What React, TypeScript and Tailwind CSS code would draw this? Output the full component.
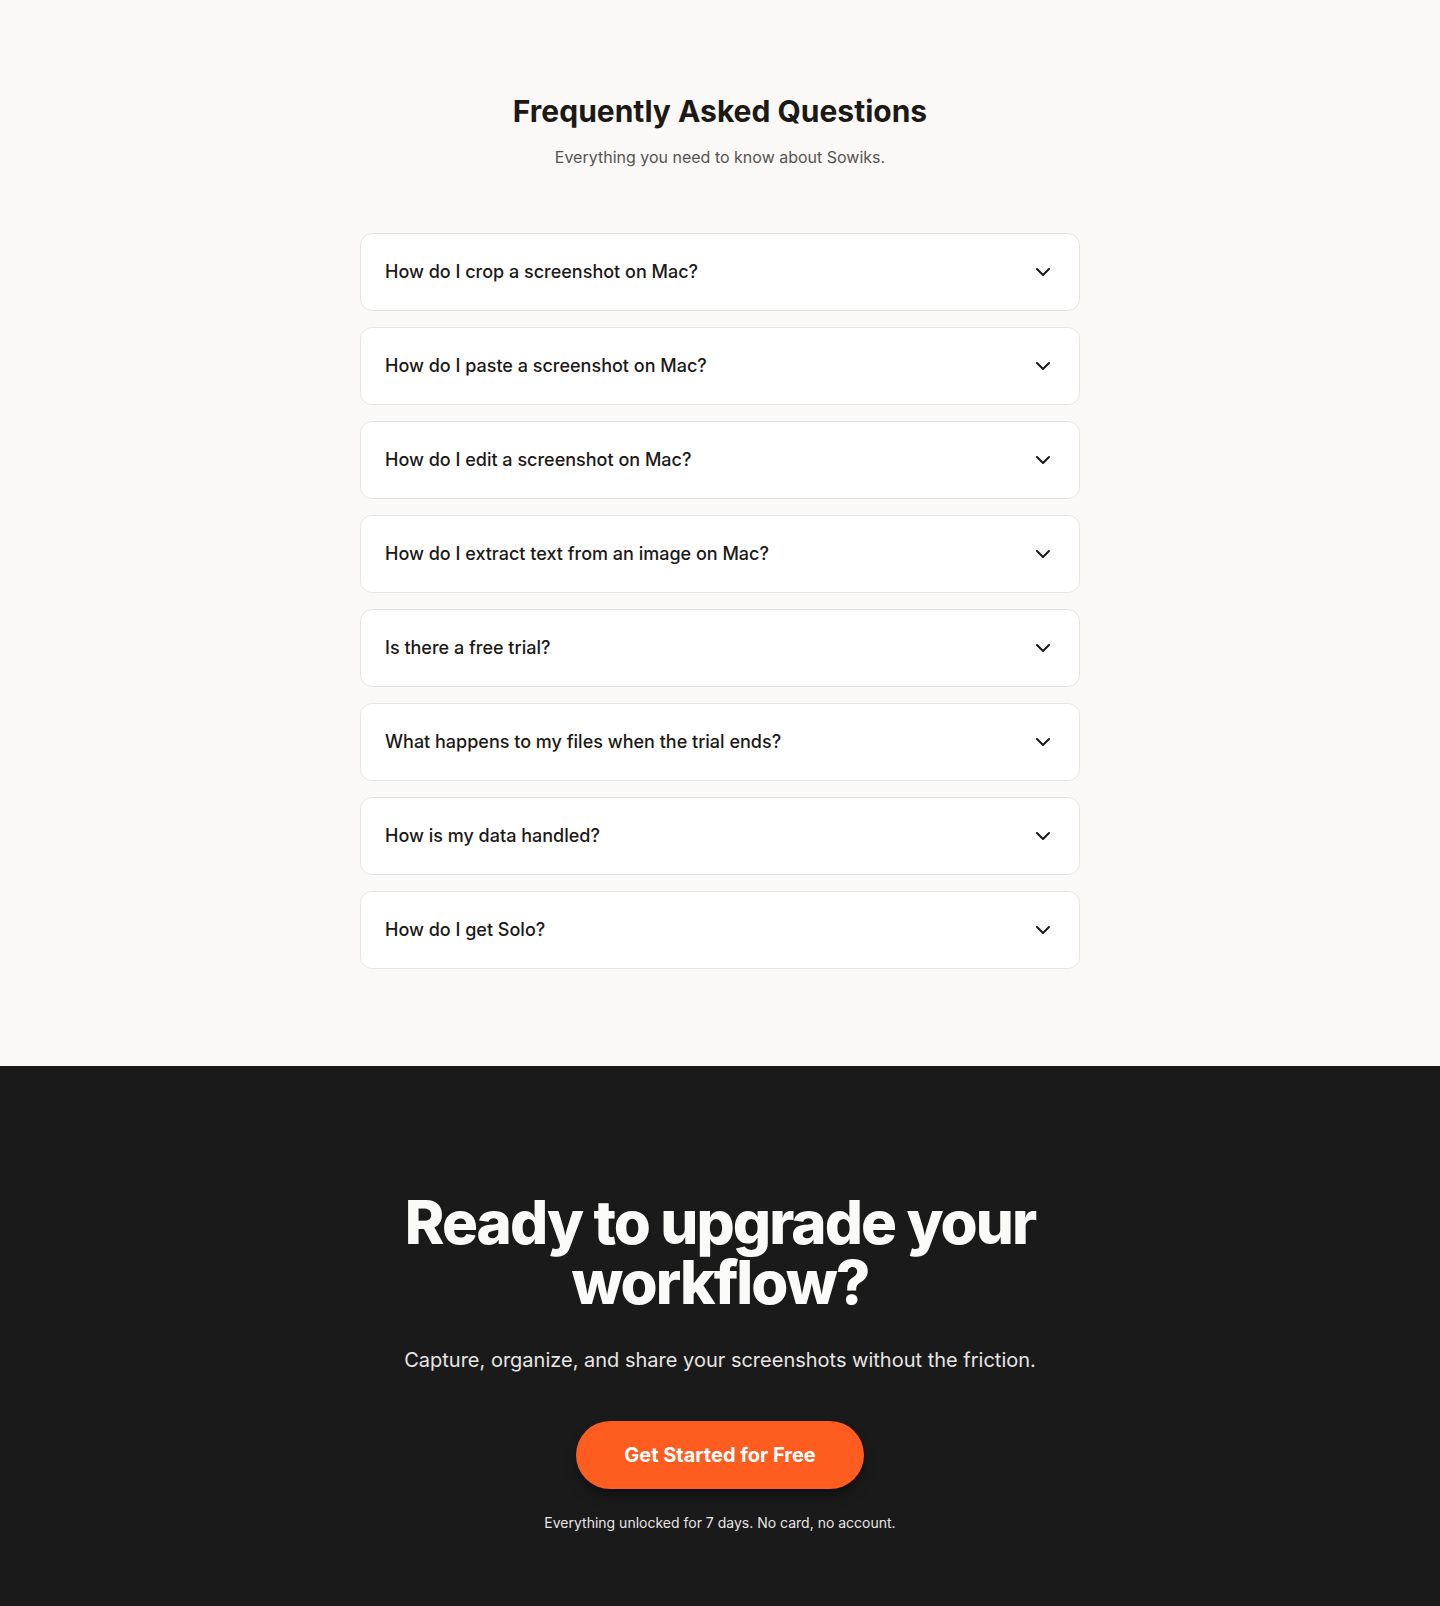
import React from 'react';
import { ChevronDown } from 'lucide-react';

const faqs = [
  'How do I crop a screenshot on Mac?',
  'How do I paste a screenshot on Mac?',
  'How do I edit a screenshot on Mac?',
  'How do I extract text from an image on Mac?',
  'Is there a free trial?',
  'What happens to my files when the trial ends?',
  'How is my data handled?',
  'How do I get Solo?',
];

export default function App() {
  return (
    <div className="min-h-screen bg-[#faf9f7] font-['Inter','Liberation_Sans',sans-serif] antialiased">
      {/* FAQ */}
      <section className="px-6 pt-[93px] pb-[97px]">
        <div className="max-w-[720px] mx-auto">
          <div className="text-center mb-16">
            <h2 className="text-3xl font-bold text-[#1c1917] mb-4">Frequently Asked Questions</h2>
            <p className="text-base text-[#57534e]">Everything you need to know about Sowiks.</p>
          </div>

          <div className="flex flex-col gap-4">
            {faqs.map((q) => (
              <button
                key={q}
                className="w-full flex items-center justify-between px-6 py-6 bg-white border border-[#e7e5e4] rounded-xl text-left"
              >
                <span className="text-lg leading-7 font-medium text-[#1c1917]">{q}</span>
                <ChevronDown className="w-6 h-6 text-[#1c1917]" strokeWidth={2} />
              </button>
            ))}
          </div>
        </div>
      </section>

      {/* CTA */}
      <section className="bg-[#1a1a1a] px-6 pt-[126px] pb-32 text-center">
        <h2 className="max-w-2xl mx-auto text-6xl leading-none font-extrabold tracking-[-0.032em] text-[#fafaf9] mb-[34px]">
          Ready to upgrade your workflow?
        </h2>
        <p className="text-xl leading-7 text-[#e7e5e4] mb-[47px]">
          Capture, organize, and share your screenshots without the friction.
        </p>
        <button className="px-12 py-5 rounded-full bg-[#ff5c1f] hover:bg-[#ff6d35] text-white text-xl leading-7 font-bold shadow-lg shadow-black/30">
          Get Started for Free
        </button>
        <p className="mt-6 text-sm text-[#e7e5e4]">Everything unlocked for 7 days. No card, no account.</p>
      </section>
    </div>
  );
}
